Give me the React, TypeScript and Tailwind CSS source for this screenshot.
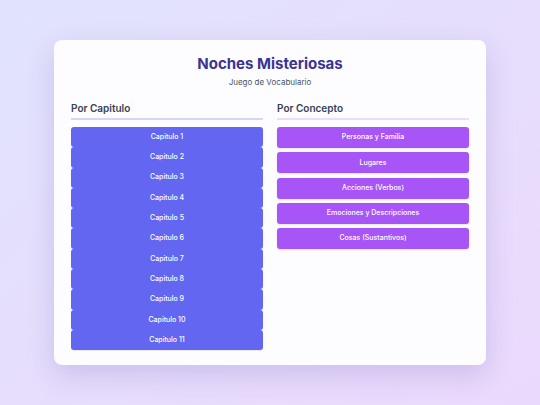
import React from "react";

const chapters = Array.from({ length: 11 }, (_, i) => `Capitulo ${i + 1}`);
const concepts = [
  "Personas y Familia",
  "Lugares",
  "Acciones (Verbos)",
  "Emociones y Descripciones",
  "Cosas (Sustantivos)",
];

export default function App() {
  return (
    <div
      className="w-[540px] h-[405px] bg-gradient-to-br from-[#e1e3fc] to-[#ebd9fc] flex items-start justify-center pt-[40px]"
      style={{ fontFamily: "Inter, 'Noto Sans', sans-serif" }}
    >
      <div className="w-[432px] h-[325px] bg-[#fdfcff] rounded-[8px] shadow-[0_10px_28px_rgba(80,60,160,0.18)] px-[17px] pt-[14px]">
        <h1 className="text-center text-[15px] leading-[20px] font-bold text-[#3b3494]">
          Noches Misteriosas
        </h1>
        <p className="text-center text-[8px] leading-[12px] text-[#4b5563] mt-[2px]">
          Juego de Vocabulario
        </p>
        <div className="grid grid-cols-2 gap-[14px] mt-[13px]">
          <div>
            <h2 className="text-[10px] leading-[14px] font-semibold text-[#374151]">
              Por Capitulo
            </h2>
            <div className="h-[2px] bg-[#d4d7fb] mt-[3px] mb-[7px]" />
            <div className="flex flex-col">
              {chapters.map((c) => (
                <div
                  key={c}
                  className="h-[20.3px] bg-[#6366f1] rounded-[3px] flex items-center justify-center text-white text-[7px] font-medium shadow-[0_1px_1px_rgba(0,0,0,0.08)]"
                >
                  {c}
                </div>
              ))}
            </div>
          </div>
          <div>
            <h2 className="text-[10px] leading-[14px] font-semibold text-[#374151]">
              Por Concepto
            </h2>
            <div className="h-[2px] bg-[#eddcfb] mt-[3px] mb-[7px]" />
            <div className="flex flex-col gap-[4.3px]">
              {concepts.map((c) => (
                <div
                  key={c}
                  className="h-[21px] bg-[#a855f7] rounded-[3px] flex items-center justify-center text-white text-[7px] font-medium shadow-[0_1px_2px_rgba(0,0,0,0.1)]"
                >
                  {c}
                </div>
              ))}
            </div>
          </div>
        </div>
      </div>
    </div>
  );
}
